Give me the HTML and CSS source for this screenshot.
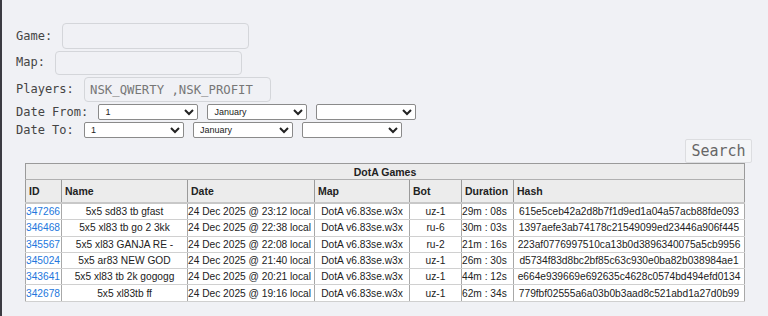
FILE: index.html
```html
<!DOCTYPE html>
<html lang="en">
<head>
    <meta charset="UTF-8">
    <meta name="viewport" content="width=device-width, initial-scale=1.0">
    <title>DotA Games</title>
    <link rel="stylesheet" href="styles.css">
</head>
<body>

    <div class="page">
        <form class="filters">
            <div class="row row-game"><label>Game: </label><input type="text" class="field"></div>
            <div class="row row-map"><label>Map: </label><input type="text" class="field"></div>
            <div class="row row-players"><label>Players: </label><input type="text" class="field" value="NSK_QWERTY ,NSK_PROFIT"></div>
            <div class="row row-date">
                <label>Date From: </label>
                <select class="pick"><option>1</option></select>
                <select class="pick"><option>January</option></select>
                <select class="pick"><option></option></select>
            </div>
            <div class="row row-date">
                <label>Date To: </label>
                <select class="pick"><option>1</option></select>
                <select class="pick"><option>January</option></select>
                <select class="pick"><option></option></select>
            </div>
            <div class="actions"><button type="button" class="search">Search</button></div>
        </form>

        <table class="games">
            <colgroup>
                <col class="c-id">
                <col class="c-name">
                <col class="c-date">
                <col class="c-map">
                <col class="c-bot">
                <col class="c-dur">
                <col class="c-hash">
            </colgroup>
            <tr><th colspan="7" class="title">DotA Games</th></tr>
            <tr class="head">
                <th>ID</th>
                <th>Name</th>
                <th>Date</th>
                <th>Map</th>
                <th>Bot</th>
                <th>Duration</th>
                <th>Hash</th>
            </tr>
            <tr>
                <td><a href="#">347266</a></td><td class="mid">5x5 sd83 tb gfast</td><td>24 Dec 2025 @ 23:12 local</td>
                <td class="mid">DotA v6.83se.w3x</td><td class="mid">uz-1</td><td>29m : 08s</td><td class="mid">615e5ceb42a2d8b7f1d9ed1a04a57acb88fde093</td>
            </tr>
            <tr>
                <td><a href="#">346468</a></td><td class="mid">5x5 xl83 tb go 2 3kk</td><td>24 Dec 2025 @ 22:38 local</td>
                <td class="mid">DotA v6.83se.w3x</td><td class="mid">ru-6</td><td>30m : 03s</td><td class="mid">1397aefe3ab74178c21549099ed23446a906f445</td>
            </tr>
            <tr>
                <td><a href="#">345567</a></td><td class="mid">5x5 xl83 GANJA RE -</td><td>24 Dec 2025 @ 22:08 local</td>
                <td class="mid">DotA v6.83se.w3x</td><td class="mid">ru-2</td><td>21m : 16s</td><td class="mid">223af0776997510ca13b0d3896340075a5cb9956</td>
            </tr>
            <tr>
                <td><a href="#">345024</a></td><td class="mid">5x5 ar83 NEW GOD</td><td>24 Dec 2025 @ 21:40 local</td>
                <td class="mid">DotA v6.83se.w3x</td><td class="mid">uz-1</td><td>26m : 30s</td><td class="mid">d5734f83d8bc2bf85c63c930e0ba82b038984ae1</td>
            </tr>
            <tr>
                <td><a href="#">343641</a></td><td class="mid">5x5 xl83 tb 2k gogogg</td><td>24 Dec 2025 @ 20:21 local</td>
                <td class="mid">DotA v6.83se.w3x</td><td class="mid">uz-1</td><td>44m : 12s</td><td class="mid">e664e939669e692635c4628c0574bd494efd0134</td>
            </tr>
            <tr>
                <td><a href="#">342678</a></td><td class="mid">5x5 xl83tb ff</td><td>24 Dec 2025 @ 19:16 local</td>
                <td class="mid">DotA v6.83se.w3x</td><td class="mid">uz-1</td><td>62m : 34s</td><td class="mid">779fbf02555a6a03b0b3aad8c521abd1a27d0b99</td>
            </tr>
        </table>
    </div>

</body>
</html>
```

FILE: styles.css
```css
body {
    margin: 0;
    padding: 0;
    background-color: #f0f1f5;
    border-left: 2px solid #3b3b42;
    height: 316px;
    box-sizing: border-box;
    font-family: 'DejaVu Sans Mono', monospace;
    color: #333;
}

.page {
    padding: 23px 16px 0 14px;
}

.filters {
    display: flex;
    flex-direction: column;
}

.row {
    display: flex;
    align-items: center;
    font-size: 12px;
    color: #444;
}

.row label {
    white-space: pre;
    margin-right: 3px;
}

.field {
    width: 187px;
    box-sizing: border-box;
    height: 26px;
    border: 1px solid #d4d6da;
    border-radius: 4px;
    background-color: #f0f1f5;
    font-family: 'DejaVu Sans Mono', monospace;
    font-size: 12.3px;
    color: #777;
    padding: 0 5px;
    margin: 0;
}

.row-map .field {
    height: 24px;
    margin-top: 2px;
}

.row-players .field {
    height: 25px;
    margin-top: 2px;
}

.row-date {
    height: 16px;
    margin-top: 2px;
}

.row-date + .row-date {
    margin-top: 2px;
}

.pick {
    width: 100px;
    height: 16px;
    margin: 0 9px 0 0;
    padding: 0 2px;
    font-family: 'Liberation Sans', Arial, sans-serif;
    font-size: 9px;
    color: #222;
    background-color: #fff;
    border: 1px solid #8a8a8a;
    border-radius: 2px;
}

.actions {
    display: flex;
    justify-content: flex-end;
    margin-top: 1px;
}

.search {
    height: 24px;
    width: 67px;
    font-family: 'DejaVu Sans Mono', monospace;
    font-size: 15px;
    color: #666;
    background-color: #f4f5f7;
    border: 1px solid #dcdde0;
    border-radius: 2px;
    padding: 0;
}

.games {
    border-collapse: collapse;
    table-layout: fixed;
    width: 720px;
    margin-left: 9px;
    font-family: 'Liberation Sans', Arial, sans-serif;
    font-size: 10.2px;
    color: #222;
    border: 1px solid #9a9a9a;
}

.games th {
    background-color: #ececec;
    font-weight: bold;
    font-size: 10.5px;
    text-align: left;
    padding: 0 3px;
    border: 1px solid #9a9a9a;
    height: 22px;
}

.games th.title {
    text-align: center;
    height: 15px;
    border-bottom: 1px solid #b0b0b0;
}

.games .head th {
    border-bottom: 2px solid #c8c8c8;
}

.games td {
    background-color: #fff;
    border: 1px solid #a8a8a8;
    border-top-color: #d0d0d0;
    border-bottom-color: #d0d0d0;
    height: 15.3px;
    padding: 0;
    white-space: nowrap;
    overflow: hidden;
}

.games td.mid {
    text-align: center;
}

.games a {
    color: #2277dd;
    text-decoration: none;
}

.c-id { width: 36px; }
.c-name { width: 126px; }
.c-date { width: 127px; }
.c-map { width: 95px; }
.c-bot { width: 52px; }
.c-dur { width: 52px; }
```
